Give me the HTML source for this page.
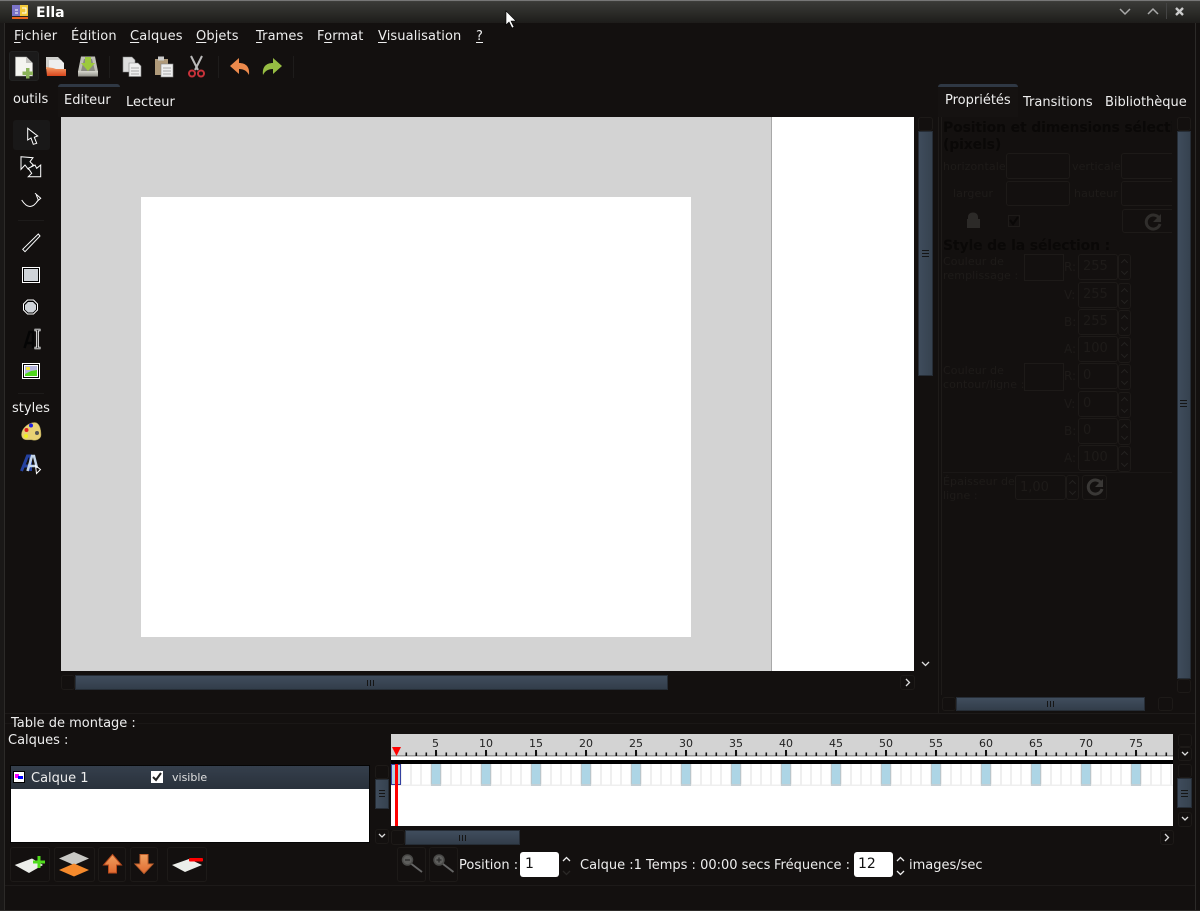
<!DOCTYPE html>
<html><head><meta charset="utf-8"><title>Ella</title>
<style>
html,body{margin:0;padding:0;background:#13100f}
#w{position:relative;width:1200px;height:911px;overflow:hidden;background:#13100f;font:13px/16px "DejaVu Sans",sans-serif;color:#eee}
#w div,#w svg{position:absolute}
.t{white-space:nowrap}
.m{letter-spacing:.1px;top:29px}
.u{text-decoration:underline;text-underline-offset:2px}
.d{color:#1e1b19;white-space:nowrap;font-size:11px;letter-spacing:.1px}
.r{color:#1e1b19;white-space:nowrap;font-size:12px;left:1064px}
.h{font:bold 14px/18px "DejaVu Sans",sans-serif;color:#0a0807;white-space:nowrap;letter-spacing:-.15px}
.b{border:1px solid #1d1a18;border-radius:3px;box-sizing:border-box}
.s{background:linear-gradient(90deg,#3f4c5c,#36424f);border:1px solid #262d36;box-sizing:border-box}
.sh{background:linear-gradient(#404d5d,#323d4a);border:1px solid #262d36;box-sizing:border-box}
.gv{width:7px;height:7px;background:repeating-linear-gradient(#151515 0 1px,transparent 1px 3px)}
.gh{width:7px;height:6px;background:repeating-linear-gradient(90deg,#151515 0 1px,transparent 1px 3px)}
.sp{border:1px solid #1d1a18;border-radius:3px;box-sizing:border-box;width:13px;height:26px;left:1118px}
.sp::before,.sp::after{content:"";position:absolute;left:3px;width:4px;height:4px;border-left:1px solid #242220;border-top:1px solid #242220}
.sp::before{top:5px;transform:rotate(45deg)}
.sp::after{bottom:5px;transform:rotate(225deg)}
.inp{left:1078px;width:40px;height:26px;padding:4px 0 0 4px;font-size:13px;color:#1e1b19;border:1px solid #1d1a18;border-radius:3px;box-sizing:border-box}
.n{font-size:11px;color:#222;line-height:14px;top:737px;white-space:nowrap}
</style></head><body><div id="w">

<!-- title bar -->
<div style="left:0;top:0;width:1200px;height:23px;background:linear-gradient(#4a4a47 0,#3a3a37 2px,#2a2a27 60%,#1d1c1a 100%)"></div>
<div style="left:0;top:0;width:1200px;height:1px;background:#777"></div>
<svg style="left:12px;top:4px" width="17" height="16" viewBox="0 0 17 16"><rect x="0" y="1" width="8" height="11" fill="#7b74c8"/><rect x="8" y="1" width="8" height="11" fill="#f1c83a"/><rect x="0" y="13" width="16" height="2" fill="#e8641c"/><path d="M3 6h3M3 9h3M10 4h4v5h-4" stroke="#fff" fill="none"/></svg>
<div class="t" style="left:36px;top:5px;font-weight:bold;font-size:14px;color:#fff">Ella</div>
<svg style="left:1118px;top:6px" width="70" height="12" viewBox="0 0 70 12"><path d="M2 3l5 5 5-5M30 8l5-5 5 5" stroke="#aaa" stroke-width="1.5" fill="none"/><path d="M58 2l7 7M65 2l-7 7" stroke="#ccc" stroke-width="2.4" fill="none"/></svg>
<div style="left:1166px;top:3px;width:1px;height:16px;background:#444"></div>
<svg style="left:505px;top:10px" width="12" height="19" viewBox="0 0 12 19"><path d="M1 1v14l3-3 3 6 2-1-3-6h5z" fill="#fff" stroke="#000" stroke-width=".6"/></svg>

<!-- window edges -->
<div style="left:0;top:23px;width:4px;height:888px;background:#1a1817"></div>
<div style="left:4px;top:23px;width:1px;height:888px;background:#2c2a28"></div>
<div style="left:1195px;top:23px;width:1px;height:888px;background:#2c2a28"></div>
<div style="left:0;top:910px;width:1200px;height:1px;background:#2c2a28"></div>

<!-- menu -->
<div class="t m" style="left:14px"><span class="u">F</span>ichier</div>
<div class="t m" style="left:71px">É<span class="u">d</span>ition</div>
<div class="t m" style="left:130px"><span class="u">C</span>alques</div>
<div class="t m" style="left:196px"><span class="u">O</span>bjets</div>
<div class="t m" style="left:256px"><span class="u">T</span>rames</div>
<div class="t m" style="left:317px">F<span class="u">o</span>rmat</div>
<div class="t m" style="left:378px"><span class="u">V</span>isualisation</div>
<div class="t m" style="left:476px"><span class="u">?</span></div>

<!-- toolbar -->
<div style="left:9px;top:51px;width:30px;height:30px;background:#1b1a1a;border:1px solid #222;border-radius:3px;box-sizing:border-box"></div>
<svg style="left:0;top:50px" width="300" height="34" viewBox="0 0 300 34">
<defs>
<linearGradient id="fo" x1="0" y1="0" x2="0" y2="1"><stop offset="0" stop-color="#f5a06a"/><stop offset="1" stop-color="#d8451c"/></linearGradient>
<linearGradient id="dr" x1="0" y1="0" x2="0" y2="1"><stop offset="0" stop-color="#d8d8d0"/><stop offset="1" stop-color="#8f8f88"/></linearGradient>
</defs>
<path d="M15.500 7h11l6 6v13h-17z" fill="#f4f4f0" stroke="#aaa" stroke-width=".6"/><path d="M26 7l6 6h-6z" fill="#c4c4c0"/><path d="M26 18h3.500v3.500H33V25h-3.500v3.500H26V25h-3.500v-3.500H26z" fill="#8bb35a"/>
<path d="M46 7h12l4 4v8H46z" fill="#cfcfcb"/><path d="M49 10h12l3 3v9H49z" fill="#eee"/><path d="M46 17l7 1 3 1h10v7H47z" fill="url(#fo)"/>
<path d="M81 6.500h14l3 15H78z" fill="#c0c0b8"/><path d="M84 9h8l3 12H81z" fill="#8a8a82"/><rect x="78" y="21" width="20" height="5.500" fill="url(#dr)"/><path d="M85 7h6v6h4l-7 8-7-8h4z" fill="#9cc93d"/>
<path d="M123 7h9l3 3v12h-12z" fill="#ddd" stroke="#888" stroke-width=".6"/><path d="M129 13h9l3 3v10.500h-12z" fill="#eee" stroke="#888" stroke-width=".6"/><path d="M131 18h8M131 21h8M131 24h8" stroke="#aaa"/>
<rect x="155" y="9" width="13" height="16" fill="#b09a7a"/><rect x="158" y="6.500" width="6" height="4" fill="#ccc"/><rect x="161" y="14" width="12" height="13" fill="#eee" stroke="#888" stroke-width=".6"/><path d="M163 18h8M163 21h8M163 24h8" stroke="#aaa"/>
<path d="M191 6l7 14M202 6l-7 14" stroke="#bbb" stroke-width="2" fill="none"/><circle cx="192" cy="23.500" r="3" fill="none" stroke="#c8323a" stroke-width="2"/><circle cx="201" cy="23.500" r="3" fill="none" stroke="#c8323a" stroke-width="2"/>
<path d="M230 16l9-8v5c7 0 11 4 10 12-2-4-5-6-10-6v5z" fill="#ec8a4c"/>
<path d="M282 16l-9-8v5c-7 0-11 4-10 12 2-4 5-6 10-6v5z" fill="#97bd43"/>
</svg>
<div style="left:109px;top:56px;width:1px;height:22px;background:#1e1c1b"></div>
<div style="left:218px;top:56px;width:1px;height:22px;background:#1e1c1b"></div>
<div style="left:293px;top:56px;width:1px;height:22px;background:#1e1c1b"></div>

<!-- left tabs -->
<div class="t" style="left:13px;top:92px">outils</div>
<div style="left:58px;top:84px;width:62px;height:33px;background:#151211;border-top:3px solid #2f3844;border-radius:3px 3px 0 0;box-sizing:border-box"></div>
<div class="t" style="left:64px;top:93px">Editeur</div>
<div class="t" style="left:126px;top:95px">Lecteur</div>

<!-- tools -->
<div style="left:13px;top:120px;width:37px;height:30px;background:#191818;border-radius:3px"></div>
<svg style="left:0;top:110px" width="60" height="370" viewBox="0 0 60 370">
<path d="M27.700 18.300V30l3.300-2 2.300 6.300 3.400-1-2.400-6 3.400-1.300z" fill="#111" stroke="#fff" stroke-width="1"/>
<path d="M21 46.700l12 1-3 4 3.300 3.300-5 4.300L25 55l-4 4.300z" fill="#111" stroke="#fff"/>
<path d="M40.700 66.700H28.300l3.400-3.400-3.400-5L35 55l1.700 3.300 4-3.300z" fill="#111" stroke="#fff"/>
<path d="M21.700 90Q30 103 38.300 90" fill="none" stroke="#fff"/><path d="M35 83.300l5.700 5-4 3.400" fill="none" stroke="#fff"/><path d="M38.300 90l-2-5" stroke="#fff"/>
<path d="M22.700 139.300L38.300 124l1.700 2-15 15.700z" fill="#111" stroke="#fff"/>
<rect x="22.500" y="157.500" width="17" height="15" fill="#000" stroke="#fff"/><rect x="24" y="159" width="14" height="12" fill="#cfd3d8"/>
<path d="M27.500 190h6l4 4v6l-4 4h-6l-4-4v-6z" fill="#000" stroke="#fff"/><path d="M28 192h5l3 3v4.500l-3 3h-5l-3-3V195z" fill="#cfd3d8"/>
<path d="M24.500 238l5-16h3.500v16M26.500 233h6" stroke="#050505" stroke-width="2.500" fill="none"/>
<path d="M34.500 220h6M37.500 220v18M34.500 238h6" stroke="#fff" stroke-width="2.600" fill="none"/><path d="M35 220h5M37.500 220v18M35 238h5" stroke="#111" stroke-width=".8" fill="none"/>
<rect x="22.500" y="253.500" width="17" height="15" fill="#000" stroke="#fff"/><rect x="24" y="255" width="14" height="12" fill="#fff"/><rect x="25" y="256" width="12" height="10" fill="#b4b4dc"/><path d="M25 266v-2l6-3 6-1v6z" fill="#4fd81c"/><rect x="26" y="257" width="4" height="3" fill="#eee23a"/>
<path d="M21.500 325c0-7 7-12.500 13.500-12.500 5 .5 6 8 6 12.500 0 4-5 6-8.500 5-4-1-10 2-11-5z" fill="#e8d174" stroke="#a89a50" stroke-width=".5"/><circle cx="26.500" cy="320" r="2" fill="#e02020"/><circle cx="31" cy="315.500" r="2" fill="#2020e0"/><circle cx="26" cy="326" r="2" fill="#f0f020"/><circle cx="37" cy="323" r="2" fill="#555"/>
<path d="M21.500 361l6-15h3v15M23.500 356h6" stroke="#2542a0" stroke-width="3" fill="none"/>
<path d="M27.500 361l4.500-15h2l3 12M29.500 356h6" stroke="#c3d5ea" stroke-width="2.500" fill="none"/>
<path d="M35.500 355.500l5 4-4 4z" fill="none" stroke="#fff"/>
</svg>
<div style="left:18px;top:220px;width:26px;height:1px;background:#1d1b1a"></div>
<div style="left:18px;top:393px;width:26px;height:1px;background:#1d1b1a"></div>
<div class="t" style="left:12px;top:403px;line-height:12px">styles</div>

<!-- canvas -->
<div style="left:61px;top:117px;width:853px;height:554px;background:#d3d3d3"></div>
<div style="left:772px;top:117px;width:142px;height:554px;background:#fff"></div>
<div style="left:771px;top:117px;width:1px;height:554px;background:#a8a8a8"></div>
<div style="left:141px;top:197px;width:550px;height:440px;background:#fff"></div>

<!-- canvas scrollbars -->
<div class="b" style="left:918px;top:117px;width:15px;height:14px"></div>
<div class="s" style="left:918px;top:131px;width:15px;height:245px"></div>
<div class="gv" style="left:922px;top:250px"></div>
<svg style="left:920px;top:660px" width="11" height="8" viewBox="0 0 11 8"><path d="M2 2l3.500 3.500L9 2" stroke="#ddd" stroke-width="1.300" fill="none"/></svg>
<div class="b" style="left:61px;top:675px;width:14px;height:15px"></div>
<div class="sh" style="left:75px;top:675px;width:593px;height:15px"></div>
<div class="gh" style="left:367px;top:680px"></div>
<div class="b" style="left:900px;top:675px;width:15px;height:15px"></div>
<svg style="left:903px;top:678px" width="9" height="9" viewBox="0 0 9 9"><path d="M3 1l3.500 3.500L3 8" stroke="#ddd" stroke-width="1.300" fill="none"/></svg>

<!-- right tabs -->
<div style="left:938px;top:84px;width:80px;height:33px;background:#151211;border-top:3px solid #2f3844;border-radius:3px 3px 0 0;box-sizing:border-box"></div>
<div class="t" style="left:945px;top:93px">Propriétés</div>
<div class="t" style="left:1023px;top:95px">Transitions</div>
<div class="t" style="left:1105px;top:95px">Bibliothèque</div>

<!-- properties (insensitive) -->
<div style="left:938px;top:117px;width:238px;height:596px;border-left:1px solid #1e1b19;box-sizing:border-box"></div>
<div style="left:941px;top:117px;width:1px;height:578px;background:#1e1b19"></div>
<div id="p" style="left:943px;top:117px;width:229px;height:578px;overflow:hidden">
 <div class="h" style="left:0;top:2px">Position et dimensions sélection</div>
 <div class="h" style="left:0;top:19px">(pixels)</div>
 <div class="d" style="left:0;top:42px">horizontale</div>
 <div class="d" style="left:129px;top:42px">verticale</div>
 <div class="d" style="left:10px;top:69px">largeur</div>
 <div class="d" style="left:131px;top:69px">hauteur</div>
 <div class="b" style="left:63px;top:36px;width:64px;height:26px"></div>
 <div class="b" style="left:178px;top:36px;width:64px;height:26px"></div>
 <div class="b" style="left:63px;top:64px;width:64px;height:25px"></div>
 <div class="b" style="left:178px;top:64px;width:64px;height:25px"></div>
 <div class="b" style="left:179px;top:92px;width:64px;height:24px"></div>
 <div class="h" style="left:0;top:120px">Style de la sélection :</div>
 <div class="d" style="left:0;top:137px">Couleur de</div>
 <div class="d" style="left:0;top:151px">remplissage :</div>
 <div class="d" style="left:0;top:246px">Couleur de</div>
 <div class="d" style="left:0;top:260px">contour/ligne :</div>
 <div class="d" style="left:0;top:357px">Épaisseur de</div>
 <div class="d" style="left:0;top:371px">ligne :</div>
 <div style="left:0;top:355px;width:229px;height:1px;background:#1a1716"></div>
 <div class="b" style="left:81px;top:137px;width:40px;height:27px;border-radius:0"></div>
 <div class="b" style="left:81px;top:246px;width:40px;height:28px;border-radius:0"></div>
 <div class="b" style="left:72px;top:358px;width:51px;height:25px;padding:4px 0 0 4px;font-size:13px;color:#1e1b19">1,00</div>
 <div class="sp" style="left:123px;top:358px;height:25px"></div>
 <div class="b" style="left:139px;top:358px;width:25px;height:25px"></div>
</div>
<svg style="left:965px;top:209px" width="200" height="26" viewBox="0 0 200 26"><path d="M3 10V8c0-6 10-6 10 0v2h2v9H2v-9z" fill="#2c2a28"/><rect x="43.500" y="6.500" width="11" height="11" fill="none" stroke="#1e1b19"/><path d="M45 11l3 4 5-7" stroke="#0a0807" stroke-width="2" fill="none"/><path d="M194 9a7 7 0 1 0 1 6" stroke="#302e2c" stroke-width="3" fill="none"/><path d="M196 5v8h-8z" fill="#302e2c"/></svg>
<svg style="left:1086px;top:478px" width="20" height="20" viewBox="0 0 20 20"><path d="M15 5a7 7 0 1 0 1 6" stroke="#3a3836" stroke-width="3" fill="none"/><path d="M17 1v8h-8z" fill="#3a3836"/></svg>

<div class="r" style="top:259px">R:</div><div class="inp" style="top:254px">255</div><div class="sp" style="top:254px"></div>
<div class="r" style="top:287px">V:</div><div class="inp" style="top:282px">255</div><div class="sp" style="top:283px"></div>
<div class="r" style="top:314px">B:</div><div class="inp" style="top:309px">255</div><div class="sp" style="top:310px"></div>
<div class="r" style="top:341px">A:</div><div class="inp" style="top:336px">100</div><div class="sp" style="top:337px"></div>
<div class="r" style="top:368px">R:</div><div class="inp" style="top:363px">0</div><div class="sp" style="top:364px"></div>
<div class="r" style="top:396px">V:</div><div class="inp" style="top:391px">0</div><div class="sp" style="top:392px"></div>
<div class="r" style="top:423px">B:</div><div class="inp" style="top:418px">0</div><div class="sp" style="top:419px"></div>
<div class="r" style="top:450px">A:</div><div class="inp" style="top:445px">100</div><div class="sp" style="top:446px"></div>

<!-- right scrollbars -->
<div class="b" style="left:1177px;top:117px;width:14px;height:14px"></div>
<div class="s" style="left:1177px;top:131px;width:14px;height:548px"></div>
<div class="gv" style="left:1180px;top:400px"></div>
<div class="b" style="left:1177px;top:679px;width:14px;height:14px"></div>
<div class="b" style="left:942px;top:697px;width:14px;height:14px"></div>
<div class="sh" style="left:956px;top:697px;width:189px;height:14px"></div>
<div class="gh" style="left:1047px;top:701px"></div>
<div class="b" style="left:1158px;top:697px;width:15px;height:14px"></div>

<!-- bottom headings -->
<div style="left:5px;top:713px;width:1190px;height:1px;background:#1d1a19"></div>
<div style="left:5px;top:723px;width:1190px;height:1px;background:#1a1716"></div>
<div class="t" style="left:11px;top:718px;line-height:12px">Table de montage :</div>
<div class="t" style="left:8px;top:735px;line-height:12px">Calques :</div>

<!-- layer list -->
<div style="left:10px;top:765px;width:360px;height:78px;background:#050505"></div>
<div style="left:11px;top:766px;width:358px;height:76px;background:#fff"></div>
<div style="left:11px;top:766px;width:358px;height:23px;background:linear-gradient(#353f4c,#29313b)"></div>
<svg style="left:13px;top:771px" width="12" height="12" viewBox="0 0 12 12"><rect width="12" height="12" fill="#000"/><rect x="1" y="1" width="10" height="10" fill="#fff"/><rect x="2" y="3" width="4" height="4" fill="#f0f"/><rect x="5" y="5" width="5" height="3" fill="#00f"/></svg>
<div class="t" style="left:31px;top:773px;line-height:12px">Calque 1</div>
<svg style="left:151px;top:771px" width="12" height="12" viewBox="0 0 12 12"><rect width="12" height="12" fill="#fff"/><path d="M2 6l3 3 5-7" stroke="#222" stroke-width="2" fill="none"/></svg>
<div class="t" style="left:172px;top:770px;font-size:11px;color:#e0e0e0">visible</div>
<div class="b" style="left:375px;top:765px;width:14px;height:14px"></div>
<div class="s" style="left:375px;top:779px;width:14px;height:30px"></div>
<div class="gv" style="left:379px;top:790px;width:6px"></div>
<div class="b" style="left:375px;top:829px;width:14px;height:15px"></div>
<svg style="left:377px;top:832px" width="10" height="8" viewBox="0 0 10 8"><path d="M2 2l3 3 3-3" stroke="#ddd" stroke-width="1.300" fill="none"/></svg>

<!-- layer buttons -->
<div class="b" style="left:10px;top:847px;width:40px;height:35px"></div>
<div class="b" style="left:54px;top:847px;width:41px;height:35px"></div>
<div class="b" style="left:98px;top:847px;width:28px;height:35px"></div>
<div class="b" style="left:130px;top:847px;width:28px;height:35px"></div>
<div class="b" style="left:167px;top:847px;width:40px;height:35px"></div>
<svg style="left:0;top:845px" width="215" height="40" viewBox="0 0 215 40">
<defs><linearGradient id="ua" x1="0" y1="0" x2="0" y2="1"><stop offset="0" stop-color="#f0a060"/><stop offset="1" stop-color="#e06a30"/></linearGradient></defs>
<path d="M14.700 20l17.300-6.500 11 6.500-14 8z" fill="#eceeea"/><path d="M37.500 11h3v4.500H45v3h-4.500V23h-3v-4.500H33v-3h4.500z" fill="#4fdc1c"/>
<path d="M59 13.500L74 7l15 6.500L74 20z" fill="#c8c8c4"/><path d="M59 25l15-6.500L89 25l-15 6.500z" fill="#f58a2c"/>
<path d="M112.500 9.500l9 10.500h-5v8h-8v-8h-5z" fill="url(#ua)" stroke="#b84a1c"/>
<path d="M140 9.500h8V19h5l-9 9.500-9-9.500h5z" fill="url(#ua)" stroke="#c0602c"/>
<path d="M172 20l17-6 13 6-17 7z" fill="#eceeea"/><rect x="189" y="13" width="14" height="3.500" rx="1" fill="#f00"/>
</svg>

<!-- ruler -->
<div style="left:391px;top:734px;width:782px;height:26px;background:linear-gradient(#d3d3d3 0,#d3d3d3 21px,#999 21px,#999 22.500px,#fff 22.500px)"></div>
<svg style="left:391px;top:734px" width="782" height="22" viewBox="0 0 782 22">
<defs><pattern id="tk" width="10" height="22" patternUnits="userSpaceOnUse" x="4.500"><rect x="0" y="18.500" width="1.600" height="3.500" fill="#111"/></pattern>
<pattern id="tb" width="50" height="22" patternUnits="userSpaceOnUse" x="44"><rect x="0" y="16" width="2" height="6" fill="#111"/></pattern></defs>
<rect x="14" width="768" height="22" fill="url(#tk)"/><rect width="782" height="22" fill="url(#tb)"/>
<path d="M1 13h9l-4.500 9z" fill="#f00"/>
</svg>
<div class="t n" style="left:432px">5</div>
<div class="t n" style="left:479px">10</div>
<div class="t n" style="left:529px">15</div>
<div class="t n" style="left:579px">20</div>
<div class="t n" style="left:629px">25</div>
<div class="t n" style="left:679px">30</div>
<div class="t n" style="left:729px">35</div>
<div class="t n" style="left:779px">40</div>
<div class="t n" style="left:829px">45</div>
<div class="t n" style="left:879px">50</div>
<div class="t n" style="left:929px">55</div>
<div class="t n" style="left:979px">60</div>
<div class="t n" style="left:1029px">65</div>
<div class="t n" style="left:1079px">70</div>
<div class="t n" style="left:1129px">75</div>

<!-- timeline -->
<div style="left:391px;top:760px;width:782px;height:4px;background:#000"></div>
<div style="left:391px;top:764px;width:782px;height:62px;background:#fff"></div>
<svg style="left:391px;top:764px" width="782" height="22" viewBox="0 0 782 22">
<defs><pattern id="cl" width="10" height="22" patternUnits="userSpaceOnUse" x="-1"><rect x="0" y="0" width="2" height="22" fill="#efefef"/><rect y="20.500" width="10" height="1.500" fill="#efefef"/></pattern>
<pattern id="kf" width="50" height="22" patternUnits="userSpaceOnUse" x="40"><rect width="10" height="21" fill="#add5e5"/><rect width="1" height="21" fill="#b8c6cc"/><rect x="9" width="1" height="21" fill="#b8c6cc"/><rect y="20" width="10" height="2" fill="#c4cfd4"/></pattern></defs>
<rect width="782" height="22" fill="url(#cl)"/><rect x="40" width="742" height="22" fill="url(#kf)"/>
<rect x=".5" y=".5" width="9" height="20" fill="#add5e5" stroke="#3340a0"/>
</svg>
<div style="left:395px;top:764px;width:3px;height:62px;background:#f00"></div>

<!-- timeline scrollbars -->
<div class="b" style="left:1178px;top:734px;width:14px;height:13px"></div>
<div class="b" style="left:1178px;top:747px;width:14px;height:14px"></div>
<svg style="left:1180px;top:750px" width="10" height="8" viewBox="0 0 10 8"><path d="M2 2l3 3 3-3" stroke="#ddd" stroke-width="1.300" fill="none"/></svg>
<div class="b" style="left:1178px;top:764px;width:14px;height:14px"></div>
<div class="s" style="left:1177px;top:778px;width:15px;height:30px"></div>
<div class="gv" style="left:1181px;top:790px"></div>
<div class="b" style="left:1178px;top:812px;width:14px;height:15px"></div>
<svg style="left:1180px;top:815px" width="10" height="8" viewBox="0 0 10 8"><path d="M2 2l3 3 3-3" stroke="#ddd" stroke-width="1.300" fill="none"/></svg>
<div class="b" style="left:391px;top:830px;width:14px;height:15px"></div>
<div class="sh" style="left:405px;top:830px;width:115px;height:15px"></div>
<div class="gh" style="left:459px;top:835px"></div>
<div class="b" style="left:1160px;top:830px;width:14px;height:15px"></div>
<svg style="left:1162px;top:833px" width="9" height="9" viewBox="0 0 9 9"><path d="M3 1l3.500 3.500L3 8" stroke="#ddd" stroke-width="1.300" fill="none"/></svg>

<!-- bottom controls -->
<div class="b" style="left:397px;top:847px;width:29px;height:35px"></div>
<div class="b" style="left:429px;top:847px;width:29px;height:35px"></div>
<svg style="left:397px;top:848px" width="60" height="32" viewBox="0 0 60 32">
<circle cx="10.500" cy="12" r="5" fill="#5e5e5c" stroke="#4a4a48" stroke-width="1.500"/><path d="M8 12h5" stroke="#2a2a2a" stroke-width="1.300"/><path d="M14.500 16l10.500 8" stroke="#666" stroke-width="1.800"/>
<circle cx="42" cy="12" r="5" fill="#5e5e5c" stroke="#4a4a48" stroke-width="1.500"/><path d="M39.500 12h5M42 9.500v5" stroke="#2a2a2a" stroke-width="1.300"/><path d="M46 16l10.500 8" stroke="#666" stroke-width="1.800"/>
</svg>
<div class="t" style="left:459px;top:858px">Position :</div>
<div class="t" style="left:520px;top:852px;width:39px;height:25px;background:#fff;border-radius:3px;color:#111;font-size:14px;line-height:25px;text-indent:5px">1</div>
<svg style="left:561px;top:854px" width="11" height="24" viewBox="0 0 11 24"><path d="M2 7l3.500-3.500L9 7" stroke="#eee" stroke-width="1.300" fill="none"/><path d="M2 17l3.500 3.500L9 17" stroke="#2a2826" stroke-width="1.300" fill="none"/></svg>
<div class="t" style="left:580px;top:858px">Calque :1</div>
<div class="t" style="left:646px;top:858px">Temps : 00:00 secs</div>
<div class="t" style="left:774px;top:858px">Fréquence :</div>
<div class="t" style="left:854px;top:852px;width:39px;height:25px;background:#fff;border-radius:3px;color:#111;font-size:14px;line-height:25px;text-indent:4px">12</div>
<svg style="left:895px;top:854px" width="11" height="24" viewBox="0 0 11 24"><path d="M2 7l3.500-3.500L9 7" stroke="#eee" stroke-width="1.300" fill="none"/><path d="M2 17l3.500 3.500L9 17" stroke="#eee" stroke-width="1.300" fill="none"/></svg>
<div class="t" style="left:909px;top:858px">images/sec</div>
<div style="left:5px;top:885px;width:1190px;height:1px;background:#1d1a19"></div>
</div></body></html>
